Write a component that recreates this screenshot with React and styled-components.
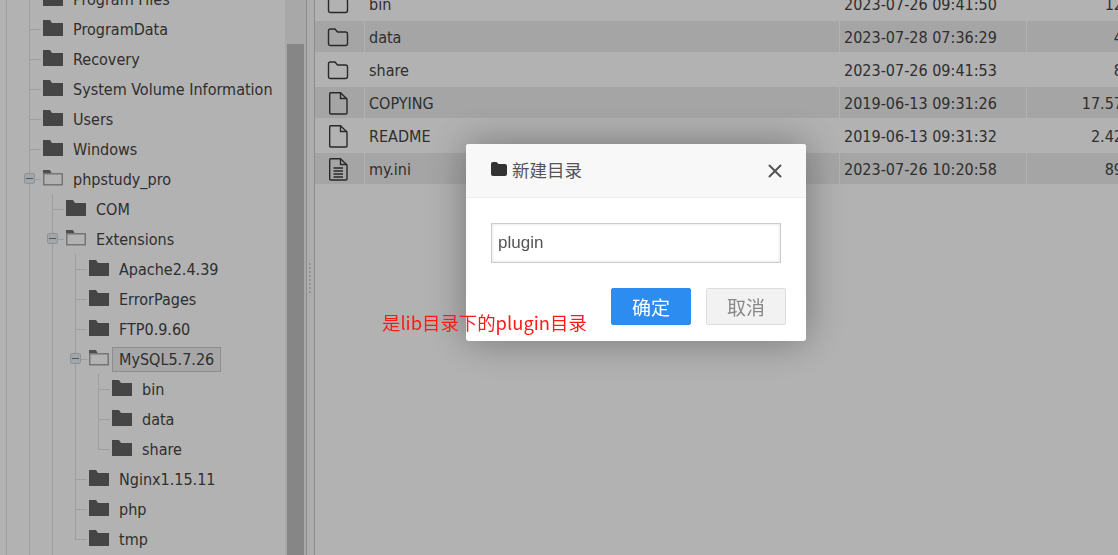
import React from "react";
import styled, { createGlobalStyle } from "styled-components";
import { X } from "lucide-react";

const treeRows = [
  { guides: 1, label: "Program Files" },
  { guides: 1, label: "ProgramData" },
  { guides: 1, label: "Recovery" },
  { guides: 1, label: "System Volume Information" },
  { guides: 1, label: "Users" },
  { guides: 1, label: "Windows" },
  { guides: 1, label: "phpstudy_pro", open: true },
  { guides: 2, label: "COM" },
  { guides: 2, label: "Extensions", open: true },
  { guides: 3, label: "Apache2.4.39" },
  { guides: 3, label: "ErrorPages" },
  { guides: 3, label: "FTP0.9.60" },
  { guides: 3, label: "MySQL5.7.26", open: true, selected: true },
  { guides: 4, label: "bin" },
  { guides: 4, label: "data" },
  { guides: 4, label: "share", last: true },
  { guides: 3, label: "Nginx1.15.11" },
  { guides: 3, label: "php" },
  { guides: 3, label: "tmp", last: true },
];

const files = [
  { name: "bin", type: "folder", date: "2023-07-26 09:41:50", size: "12" },
  { name: "data", type: "folder", date: "2023-07-28 07:36:29", size: "4" },
  { name: "share", type: "folder", date: "2023-07-26 09:41:53", size: "8" },
  { name: "COPYING", type: "file", date: "2019-06-13 09:31:26", size: "17.57" },
  { name: "README", type: "file", date: "2019-06-13 09:31:32", size: "2.42" },
  { name: "my.ini", type: "text", date: "2023-07-26 10:20:58", size: "89" },
];

const FilledFolder = () => (
  <svg width="20" height="16" viewBox="0 0 20 16">
    <path d="M0 0 H7 L9 3 H20 V16 H0 Z" fill="#636363" />
  </svg>
);

const OpenFolder = () => (
  <svg width="20" height="16" viewBox="0 0 20 16">
    <path d="M0 0 H7 L8.5 3 H0 Z" fill="#707070" />
    <path d="M.75 3.75 H19.25 V14.75 H.75 Z" fill="none" stroke="#a8a8a8" strokeWidth="1.5" />
  </svg>
);

const TitleFolder = () => (
  <svg width="16" height="14" viewBox="0 0 16 14">
    <path d="M0 2 Q0 0 2 0 H5.5 L7.5 2 H14 Q16 2 16 4 V12 Q16 14 14 14 H2 Q0 14 0 12 Z" fill="#333" />
  </svg>
);

const FileIcon = ({ type }) => {
  if (type === "folder") {
    return (
      <svg width="22" height="22" viewBox="0 0 22 22" fill="none" stroke="#3a3a3a" strokeWidth="1.4">
        <path d="M1.5 5 Q1.5 3 3.5 3 H8 L10.5 6 H18.5 Q20.5 6 20.5 8 V17.5 Q20.5 19.5 18.5 19.5 H3.5 Q1.5 19.5 1.5 17.5 Z" />
      </svg>
    );
  }
  return (
    <svg width="22" height="24" viewBox="0 0 22 24" fill="none" stroke="#3a3a3a" strokeWidth="1.4">
      <path d="M2.7 2.7 Q2.7 1.7 3.7 1.7 H13.5 L20 8 V22 Q20 23 19 23 H3.7 Q2.7 23 2.7 22 Z" />
      <path d="M13.5 1.7 V7.5 H20" />
      {type === "text" && <path d="M6.5 11 H16 M6.5 14 H16 M6.5 17 H16 M6.5 20 H16" strokeWidth="1.3" />}
    </svg>
  );
};

const App = () => {
  return (
    <>
      <GlobalStyle />
      <Page>
        <Sidebar>
          <Tree>
            {treeRows.map((row) => (
              <TreeRow key={row.label}>
                {Array.from({ length: row.guides }).map((_, i) => (
                  <Guide key={i} />
                ))}
                <Connector $last={row.last}>{row.open && <Toggle />}</Connector>
                <FolderSlot>{row.open ? <OpenFolder /> : <FilledFolder />}</FolderSlot>
                <NodeLabel $selected={row.selected}>{row.label}</NodeLabel>
              </TreeRow>
            ))}
            <TreeRow>
              <Guide />
              <Guide />
              <Guide />
            </TreeRow>
          </Tree>
          <ScrollTrack>
            <ScrollThumb />
          </ScrollTrack>
        </Sidebar>
        <Splitter>
          <Grip />
        </Splitter>
        <FileList>
          {files.map((file, i) => (
            <FileRow key={file.name} $alt={i % 2 === 1}>
              <IconCell>
                <FileIcon type={file.type} />
              </IconCell>
              <NameCell>{file.name}</NameCell>
              <DateCell>{file.date}</DateCell>
              <SizeCell>{file.size}</SizeCell>
            </FileRow>
          ))}
        </FileList>
      </Page>
      <Backdrop />
      <Modal>
        <ModalHeader>
          <ModalTitle>
            <TitleFolder />
            <span>新建目录</span>
          </ModalTitle>
          <CloseButton type="button">
            <X size={22} strokeWidth={2.2} />
          </CloseButton>
        </ModalHeader>
        <ModalBody>
          <NameInput defaultValue="plugin" />
          <ModalActions>
            <ActionButton type="button" $primary>
              确定
            </ActionButton>
            <ActionButton type="button">取消</ActionButton>
          </ModalActions>
        </ModalBody>
      </Modal>
      <Annotation>是lib目录下的plugin目录</Annotation>
    </>
  );
};

const GlobalStyle = createGlobalStyle`
  html, body {
    margin: 0;
    height: 100%;
    overflow: hidden;
    background: #fff;
  }
  body {
    font-family: "DejaVu Sans Condensed", "DejaVu Sans", "Noto Sans CJK SC", sans-serif;
    font-stretch: condensed;
    font-size: 16px;
    color: #444;
  }
`;

const Page = styled.div`
  display: flex;
  isolation: isolate;
  width: 1118px;
  height: 555px;
  overflow: hidden;
`;

const Sidebar = styled.aside`
  display: flex;
  flex: 0 0 306px;
  height: 555px;
  overflow: hidden;
`;

const Tree = styled.div`
  flex: 1;
  margin-top: -16px;
  padding-left: 6px;
  min-width: 0;
`;

const TreeRow = styled.div`
  display: flex;
  align-items: center;
  height: 30px;
`;

const Guide = styled.span`
  flex: 0 0 23px;
  align-self: stretch;
  border-left: 1px solid #e2e2e2;
  box-sizing: border-box;
`;

const Connector = styled.span`
  position: relative;
  flex: 0 0 14px;
  align-self: stretch;
  &::before {
    content: "";
    position: absolute;
    left: 0;
    top: 0;
    height: ${(p) => (p.$last ? "50%" : "100%")};
    border-left: 1px solid #e2e2e2;
  }
  &::after {
    content: "";
    position: absolute;
    left: 0;
    right: 2px;
    top: 15px;
    border-top: 1px solid #e2e2e2;
  }
`;

const Toggle = styled.span`
  position: absolute;
  z-index: 1;
  left: -5px;
  top: 9px;
  width: 9px;
  height: 9px;
  border: 1px solid #ccd3da;
  border-radius: 2px;
  background: #e9eef3;
  &::after {
    content: "";
    position: absolute;
    left: 1px;
    right: 1px;
    top: 4px;
    border-top: 1px solid #6d8197;
  }
`;

const FolderSlot = styled.span`
  display: flex;
  flex: 0 0 20px;
  margin-top: -3px;
`;

const NodeLabel = styled.span`
  margin-left: 3px;
  padding: 0 6px;
  height: 23px;
  line-height: 24px;
  white-space: nowrap;
  border: 1px solid ${(p) => (p.$selected ? "#ccc" : "transparent")};
  background: ${(p) => (p.$selected ? "#f0f0f0" : "transparent")};
`;

const ScrollTrack = styled.div`
  display: flex;
  flex-direction: column;
  flex: 0 0 21px;
  padding: 44px 2px 0;
  box-sizing: border-box;
  background: #f1f1f1;
`;

const ScrollThumb = styled.div`
  flex: 1;
  background: #c1c1c1;
`;

const Splitter = styled.div`
  display: flex;
  align-items: center;
  justify-content: center;
  flex: 0 0 9px;
  box-sizing: border-box;
  border-left: 1px solid #cbcbcb;
  border-right: 1px solid #cbcbcb;
  background: #f8f8f8;
`;

const Grip = styled.div`
  width: 0;
  height: 30px;
  margin-right: 1px;
  border-left: 2px dotted #d4d4d4;
`;

const FileList = styled.main`
  flex: 1;
  min-width: 0;
  margin-top: -12px;
`;

const FileRow = styled.div`
  display: grid;
  grid-template-columns: 49px 474px 186px 96px;
  grid-template-rows: 31px;
  column-gap: 1px;
  margin-bottom: 2px;
  line-height: 34px;
  white-space: nowrap;
  & > * {
    min-height: 0;
    background: ${(p) => (p.$alt ? "#ededed" : "transparent")};
  }
`;

const IconCell = styled.div`
  display: flex;
  align-items: center;
  justify-content: center;
  padding-right: 4px;
`;

const NameCell = styled.div`
  padding-left: 4px;
`;

const DateCell = styled.div`
  padding-left: 4px;
`;

const SizeCell = styled.div`
  text-align: right;
`;

const Backdrop = styled.div`
  position: fixed;
  inset: 0;
  background: rgba(0, 0, 0, 0.3);
`;

const Modal = styled.section`
  position: fixed;
  left: 466px;
  top: 144px;
  width: 340px;
  height: 197px;
  border-radius: 3px;
  background: #fff;
  box-shadow: 0 0 40px rgba(0, 0, 0, 0.35);
`;

const ModalHeader = styled.header`
  display: flex;
  align-items: center;
  justify-content: space-between;
  box-sizing: border-box;
  height: 54px;
  padding: 0 20px 0 25px;
  border-bottom: 1px solid #eee;
  border-radius: 3px 3px 0 0;
  background: #f8f8f8;
`;

const ModalTitle = styled.h2`
  display: flex;
  align-items: center;
  gap: 5px;
  margin: 0 0 3px;
  font-family: "Noto Sans CJK SC", sans-serif;
  font-size: 17.5px;
  font-weight: 400;
  color: #555;
`;

const CloseButton = styled.button`
  display: flex;
  padding: 0;
  border: none;
  background: none;
  color: #555;
`;

const ModalBody = styled.div`
  padding: 25px 20px 16px 25px;
`;

const NameInput = styled.input`
  display: block;
  box-sizing: border-box;
  width: 290px;
  height: 40px;
  padding: 0 6px;
  border: 1px solid #ccc;
  box-shadow: inset 0 0 3px rgba(0, 0, 0, 0.15);
  font-family: "Liberation Sans", sans-serif;
  font-size: 17px;
  color: #555;
  outline: none;
`;

const ModalActions = styled.div`
  display: flex;
  justify-content: flex-end;
  gap: 15px;
  margin-top: 25px;
`;

const ActionButton = styled.button`
  box-sizing: border-box;
  width: 80px;
  height: 37px;
  padding: 0;
  border: 1px solid ${(p) => (p.$primary ? "#2d8cf0" : "#ddd")};
  border-radius: 2px;
  background: ${(p) => (p.$primary ? "#2d8cf0" : "#f2f2f2")};
  color: ${(p) => (p.$primary ? "#fff" : "#888")};
  font-family: "Noto Sans CJK SC", sans-serif;
  font-size: 19px;
`;

const Annotation = styled.div`
  position: fixed;
  left: 382px;
  top: 309px;
  color: #ff1a1a;
  font-family: "Noto Sans CJK SC", sans-serif;
  font-size: 18.4px;
  line-height: 26px;
  white-space: nowrap;
`;

export default App;
